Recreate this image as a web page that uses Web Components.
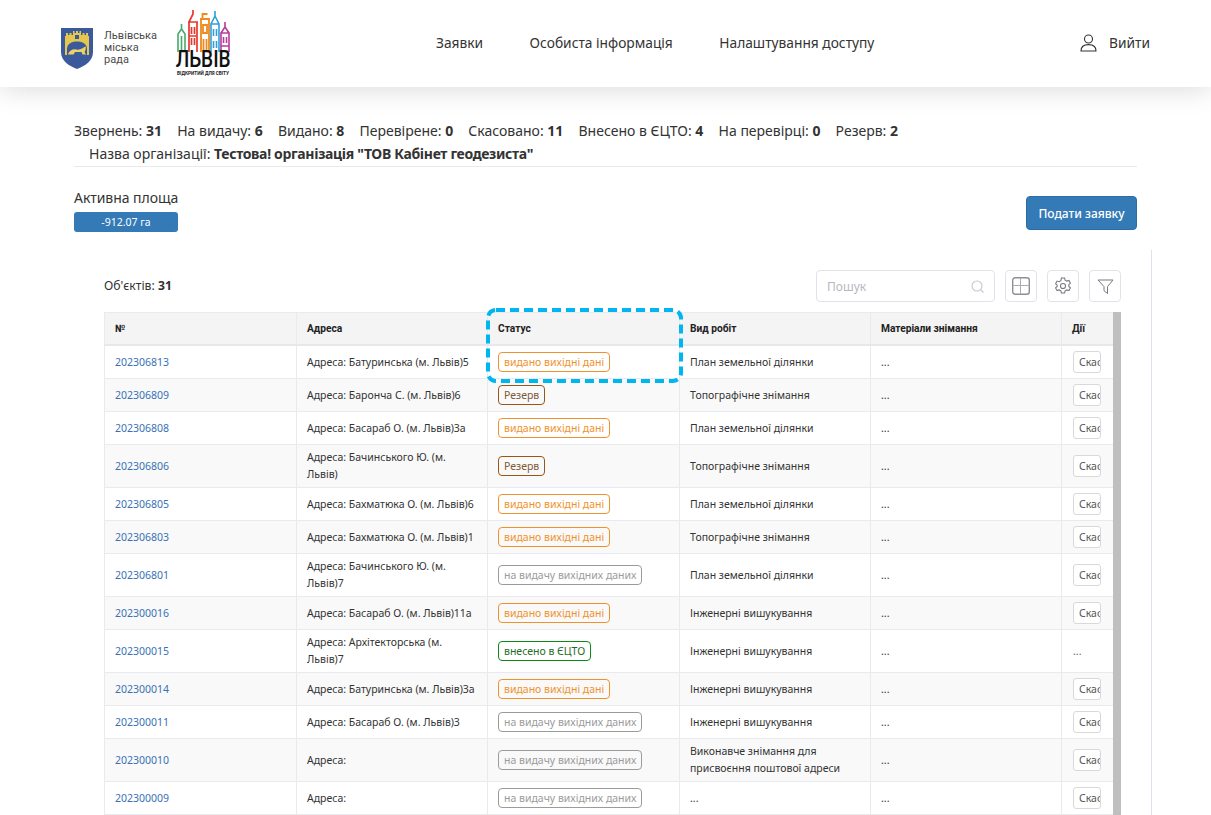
<!DOCTYPE html>
<html lang="uk"><head><meta charset="utf-8"><title>Заявки</title>
<style>
html,body{margin:0;padding:0;height:815px;overflow:hidden;background:#fff;color:#333;font-family:"Noto Sans","Open Sans",sans-serif}
</style></head><body>
<app-header></app-header>
<main-page></main-page>
<script>
function el(name, css, html, setup){
  customElements.define(name, class extends HTMLElement{
    connectedCallback(){
      if(this.shadowRoot) return;
      const r=this.attachShadow({mode:'open'});
      r.innerHTML='<style>'+css+'</style>'+(typeof html==='function'?html(this):html);
      if(setup) setup(r,this);
    }
  });
}
el('city-logos',`
:host{display:flex;align-items:flex-start;position:relative;width:170px}
.arms{display:flex;align-items:center;gap:11px;margin-top:28px}
.arms svg{display:block}
.t{font:11px/12px "Roboto",sans-serif;color:#4a4a4a;width:50px;margin-top:-1px;letter-spacing:.05px}
.lv{margin-left:22px;margin-top:10px;width:54px;display:flex;flex-direction:column;align-items:center;flex:none}
.lv svg{display:block}
.big{font:500 23px/20px "Roboto",sans-serif;color:#111;transform:scaleX(.83);margin-top:-2px;white-space:nowrap}
.sm{font:700 4.7px/6px "Roboto",sans-serif;color:#222;white-space:nowrap;margin-top:1px}
`,`<div class="arms">
<svg width="32" height="41" viewBox="0 0 32 41"><path d="M0 0H32V24C32 33 24 38 16 41C8 38 0 33 0 24Z" fill="#3b5a9c"/>
<path d="M4 27V8H5V5H7V7H8.5V5H10.5V7H12V3H13.5V5H15V3H17V5H18.5V3H20V7H21.5V5H23.5V7H25V5H27V8H28V27Z" fill="#e5c64e"/>
<path d="M6 27V21C6 15 12 13.5 16 13.5S26 15 26 21V27Z" fill="#3b5a9c"/>
<rect x="14" y="7" width="4" height="4" fill="#3b5a9c"/>
<path d="M7 26.5C8 22.5 12 20.5 15.5 21.5C19 22.5 22 19.5 25 18.5L24.5 22C23 24 24 25.5 25.5 26.5H21.5L20.5 24H14L12.5 26.5Z" fill="#edd066"/>
</svg><div class="t">Львівська міська рада</div></div>
<div class="lv"><svg width="54" height="42" viewBox="0 0 54 42" fill="none">
<g stroke="#47ab6c" stroke-width="1.6"><path d="M2 42V24L5.5 19V14M5.5 19L9 24V42M5.5 26V42"/></g>
<g stroke="#e5392f" stroke-width="1.7"><path d="M13 42V12H21V42M12 12H22M13 12L17 4V0M15.5 17V24M18.5 17V24M15.5 28V35M18.5 28V35M13 26H21"/></g>
<g stroke="#f08a1d" stroke-width="1.8"><path d="M25 42V9H33V42M24 9H34M26.5 9V4H31.5M27 15H31V23H27ZM27.5 29V42M30.5 29V42"/></g>
<g stroke="#2e9fdc" stroke-width="1.6"><path d="M35 42V14H43V42M35 14L39 6V1M43 14L39 6M37.5 19V26M40.5 19V26M37.5 31V38M40.5 31V38"/></g>
<g stroke="#b93a97" stroke-width="1.6"><path d="M45 42V23H53V42M45 23L49 17V12M53 23L49 17M47.5 27V33M50.5 27V33M45 36H53"/></g>
</svg><div class="big">ЛЬВІВ</div><div class="sm">ВІДКРИТИЙ ДЛЯ СВІТУ</div></div>`);

el('nav-link',`:host{display:block;font:13.75px/20px "Noto Sans",sans-serif;color:#333;white-space:nowrap}`,`<slot></slot>`);

el('app-header',`
:host{display:flex;height:87px;box-sizing:border-box;padding:0 61px;background:#fff;box-shadow:0 4px 24px rgba(0,0,0,.13);position:relative}
nav{display:flex;gap:46.5px;align-items:center;margin-left:205px;padding-bottom:2px}
.out{display:flex;align-items:center;gap:12px;margin-left:auto;padding-bottom:2px}
svg{display:block}
`,`<city-logos></city-logos>
<nav><nav-link>Заявки</nav-link><nav-link>Особиста інформація</nav-link><nav-link>Налаштування доступу</nav-link></nav>
<div class="out"><svg width="17" height="18" viewBox="0 0 17 18" fill="none" stroke="#333" stroke-width="1.1"><circle cx="8.5" cy="5" r="4"/><path d="M1 17C1 12.5 4 10.6 8.5 10.6S16 12.5 16 17Z"/></svg><nav-link>Вийти</nav-link></div>`);

el('stat-item',`:host{display:inline;font:14px/23px "Noto Sans",sans-serif;color:#333;white-space:nowrap}b{font-weight:700}`,
 h=>`<slot></slot> <b>${h.getAttribute('n')}</b>`);

el('stats-bar',`
:host{display:block;padding-top:32px}
.a{display:flex;gap:15.2px;height:23px;align-items:center}
.b{padding-left:15px;height:23px;font:14px/23px "Noto Sans",sans-serif;white-space:nowrap;border:0}
b{font-weight:700;color:#333;letter-spacing:-.33px}
hr{margin:0;border:0;border-top:1px solid #eaeaea;margin-top:1px}
`,`<div class="a"><stat-item n="31">Звернень:</stat-item><stat-item n="6">На видачу:</stat-item><stat-item n="8">Видано:</stat-item><stat-item n="0">Перевірене:</stat-item><stat-item n="11">Скасовано:</stat-item><stat-item n="4">Внесено в ЄЦТО:</stat-item><stat-item n="0">На перевірці:</stat-item><stat-item n="2">Резерв:</stat-item></div>
<div class="b">Назва організації: <b>Тестова! організація "ТОВ Кабінет геодезиста"</b></div><hr>`);

el('area-row',`
:host{display:flex;justify-content:space-between;align-items:flex-start;margin-top:21px}
.l{font:14px/17px "Noto Sans",sans-serif;width:104px;white-space:nowrap;padding-top:1px;letter-spacing:-.05px}
.pill{margin-top:6px;height:20px;background:#337ab7;border-radius:3px;color:#fff;font:10.5px/20px "Noto Sans",sans-serif;text-align:center;letter-spacing:0}
button{margin-top:8px;width:111px;height:34px;border:1px solid #2e6da4;border-radius:4px;background:#337ab7;color:#fff;font:12px "Noto Sans",sans-serif;font-weight:500;padding:0}
`,`<div class="l">Активна площа<div class="pill">-912.07 га</div></div><button>Подати заявку</button>`);

el('tool-btn',`:host{display:flex;width:32px;height:32px;box-sizing:border-box;border:1px solid #e1e3eb;border-radius:4px;align-items:center;justify-content:center;background:#fff}`,`<slot></slot>`);

el('table-tools',`
:host{display:flex;align-items:center;height:32px;gap:10px;margin-bottom:10px}
.c{margin-right:auto;font:12.2px "Noto Sans",sans-serif;color:#333;position:relative;top:-1px}
b{font-weight:700}
.s{width:179px;height:32px;box-sizing:border-box;border:1px solid #e1e3eb;border-radius:4px;display:flex;align-items:center;justify-content:space-between;padding:0 10px 0 10px;font:12px "Noto Sans",sans-serif;color:#b5b8c0}
svg{display:block}
`,`<div class="c">Об'єктів: <b>31</b></div>
<div class="s"><span>Пошук</span><svg width="13" height="13" viewBox="0 0 13 13" fill="none" stroke="#c4c7cc" stroke-width="1.1"><circle cx="6" cy="6" r="5"/><path d="M10 10l2.5 2.5"/></svg></div>
<tool-btn><svg width="18" height="18" viewBox="0 0 18 18" fill="none" stroke="#8d8f94" stroke-width="1.4"><rect x=".7" y=".7" width="16.6" height="16.6" rx="2.5"/><path d="M.7 8.5H17.3M8.5 .7V17.3" stroke-width="1" stroke="#aaacb0"/></svg></tool-btn>
<tool-btn><svg width="18" height="18" viewBox="0 0 17 17" fill="none" stroke="#77797e" stroke-width="1"><path d="M7 1h3l.5 2 1.6.9 2-.6 1.4 2.5-1.5 1.4v1.7l1.5 1.4-1.4 2.5-2-.6-1.6.9-.5 2H7l-.5-2-1.6-.9-2 .6-1.4-2.5 1.5-1.4V7.700L1.500 6.300l1.400-2.500 2 .6 1.600-.9z"/><circle cx="8.5" cy="8.5" r="2.4"/></svg></tool-btn>
<tool-btn><svg width="17" height="17" viewBox="0 0 17 17" fill="none" stroke="#77797e" stroke-width="1"><path d="M1 2H16L10.5 8.6V15.5L7 12.7V8.6Z"/></svg></tool-btn>`);

el('status-badge',`
:host{display:inline-block;box-sizing:border-box;height:20px;border:1px solid var(--c);color:var(--t);border-radius:4px;padding:0 5px;font:10.5px/18px "Noto Sans",sans-serif;white-space:nowrap;vertical-align:middle}
:host([k=o]){--c:#f0922b;--t:#f0922b}
:host([k=r]){--c:#9a5518;--t:#7d5a38}
:host([k=g]){--c:#9b9b9b;--t:#9b9b9b}
:host([k=e]){--c:#0c8a12;--t:#1f6b24}
`,`<slot></slot>`);

const V='План земельної ділянки',T='Топографічне знімання',I='Інженерні вишукування';
const O=['o','видано вихідні дані'],R=['r','Резерв'],G=['g','на видачу вихідних даних'],E=['e','внесено в ЄЦТО'];
const rows=[
['202306813','Адреса: Батуринська (м. Львів)5',O,V],
['202306809','Адреса: Баронча С. (м. Львів)6',R,T],
['202306808','Адреса: Басараб О. (м. Львів)3а',O,V],
['202306806','Адреса: Бачинського Ю. (м. Львів)',R,T],
['202306805','Адреса: Бахматюка О. (м. Львів)6',O,V],
['202306803','Адреса: Бахматюка О. (м. Львів)1',O,T],
['202306801','Адреса: Бачинського Ю. (м. Львів)7',G,V],
['202300016','Адреса: Басараб О. (м. Львів)11а',O,I],
['202300015','Адреса: Архітекторська (м. Львів)7',E,I,1],
['202300014','Адреса: Батуринська (м. Львів)3а',O,I],
['202300011','Адреса: Басараб О. (м. Львів)3',G,I],
['202300010','Адреса:',G,'Виконавче знімання для присвоєння поштової адреси'],
['202300009','Адреса:',G,'...'],
];
const wrapRow=r=>/Бачинського|Архітекторська/.test(r[1])||r[3].length>30;
el('data-table',`
:host{display:block;position:relative;height:503px}
.w{display:flex;height:503px;overflow:hidden;align-items:flex-start}
table{border-collapse:collapse;table-layout:fixed;width:1009px;flex:none;font:10.5px/17px "Noto Sans",sans-serif;color:#333;border:1px solid #e8eaee;margin:0}
th,td{border:1px solid #e8eaee;padding:0 10px;text-align:left;overflow:hidden}
th{background:#f4f4f4;height:31px;font:700 10.2px/14px "Roboto",sans-serif;color:#222;border-bottom:2px solid #e6e8ec}
td{height:32px}
tr.h td{height:42px}
tbody tr:nth-child(even) td{background:#f9f9f9}
a{color:#3a71b5;text-decoration:none}
.act{display:block;box-sizing:border-box;width:28px;height:22px;border:1px solid #d9d9d9;border-radius:3px;background:#fff;overflow:hidden;white-space:nowrap;padding-left:5px;line-height:20px;color:#555;font-size:10.5px}
.bar{width:8px;height:100%;background:#bfbfbf;flex:none;margin-left:-1px}
svg{position:absolute;left:382px;top:-4px;pointer-events:none}
td:last-child,th:last-child{padding-right:0}
td:last-child{padding-left:11px;color:#666}
`,`<div class="w"><table><colgroup><col style="width:192px"><col style="width:191px"><col style="width:192px"><col style="width:191px"><col style="width:191px"><col style="width:52px"></colgroup>
<thead><tr><th>№</th><th>Адреса</th><th>Статус</th><th>Вид робіт</th><th>Матеріали знімання</th><th>Дії</th></tr></thead>
<tbody>${rows.map(r=>`<tr class="${wrapRow(r)?'h':''}"><td><a href="#">${r[0]}</a></td><td>${r[1]}</td><td><status-badge k="${r[2][0]}">${r[2][1]}</status-badge></td><td>${r[3]}</td><td>...</td><td>${r[4]?'...':'<span class="act">Скасувати</span>'}</td></tr>`).join('')}</tbody></table>
<div class="bar"></div></div>
<svg width="197" height="75" viewBox="0 0 197 75" fill="none"><rect x="2" y="2" width="193" height="71" rx="8" stroke="#00b6f0" stroke-width="4" stroke-dasharray="9 5"/></svg>`);

el('orders-panel',`
:host{display:block;margin:18px -15px 0 0;padding:20px 30px 0;border-right:1px solid #dfe1ec;height:565px;box-sizing:border-box}
`,`<table-tools></table-tools><data-table></data-table>`);

el('main-page',`:host{display:block;padding:0 74px}`,`<stats-bar></stats-bar><area-row></area-row><orders-panel></orders-panel>`);
</script>
</body></html>
